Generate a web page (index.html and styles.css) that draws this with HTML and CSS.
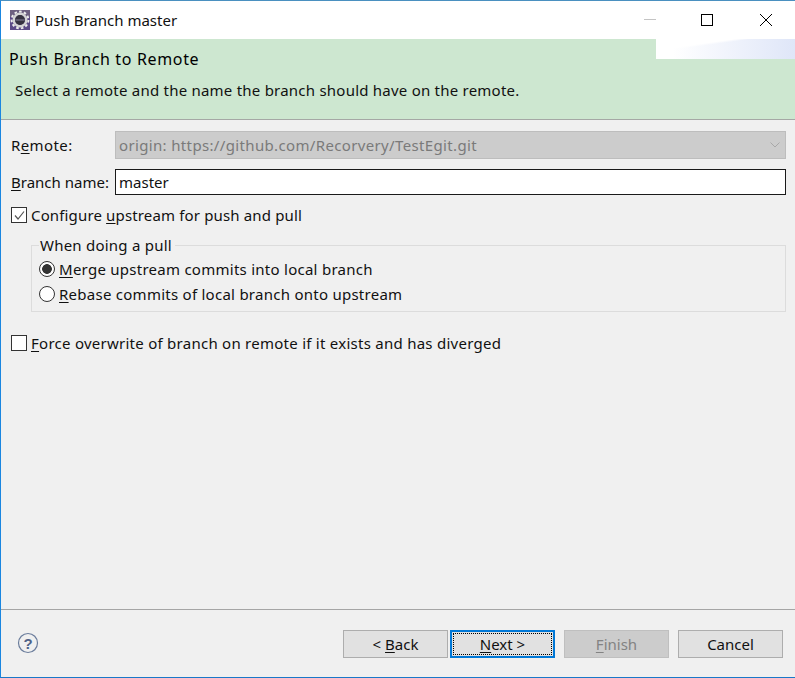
FILE: index.html
```html
<!DOCTYPE html>
<html lang="en">
<head>
<meta charset="utf-8">
<title>Push Branch master</title>
<link rel="stylesheet" href="styles.css">
</head>
<body>
<div class="window">
  <header class="titlebar">
    <div class="title">
      <svg class="app-icon" width="20" height="20" viewBox="0 0 20 20">
        <rect width="20" height="20" fill="#5b4a86"/>
        <rect width="20" height="7" fill="#6d6080"/>
        <circle cx="10" cy="10" r="8.4" fill="none" stroke="#ececec" stroke-width="2" stroke-dasharray="2.6 2.2"/>
        <circle cx="10" cy="10" r="6.2" fill="none" stroke="#d4d4d4" stroke-width="2.6"/>
        <circle cx="10" cy="10" r="4.9" fill="#35323f"/>
        <rect x="5.5" y="9.4" width="9" height="1.2" fill="#77758a"/>
      </svg>
      <span>Push Branch master</span>
    </div>
    <div class="controls">
      <svg class="ctl" width="13" height="13" viewBox="0 0 13 13"><path d="M0 5.5H12" stroke="#c4c4c4" fill="none"/></svg>
      <svg class="ctl ctl-max" width="13" height="13" viewBox="0 0 13 13"><rect x="0.5" y="0.5" width="11" height="11" fill="none" stroke="#000"/></svg>
      <svg class="ctl ctl-close" width="13" height="13" viewBox="0 0 13 13"><path d="M0 0L12 12M12 0L0 12" stroke="#000" fill="none"/></svg>
    </div>
  </header>
  <section class="banner">
    <div class="banner-corner"></div>
    <h1 class="banner-title">Push Branch to Remote</h1>
    <p class="banner-text">Select a remote and the name the branch should have on the remote.</p>
  </section>
  <main class="content">
    <div class="row">
      <label class="field-label label-remote">R<u>e</u>mote:</label>
      <div class="select"><span>origin: https://github.com/Recorvery/TestEgit.git</span>
        <svg width="10" height="6" viewBox="0 0 10 6"><path d="M0.5 0.5L5 5L9.5 0.5" fill="none" stroke="#a8a8a8"/></svg>
      </div>
    </div>
    <div class="row row-branch">
      <label class="field-label"><u>B</u>ranch name:</label>
      <div class="input">master</div>
    </div>
    <div class="check check-upstream">
      <span class="box"><svg width="13" height="13" viewBox="0 0 13 13"><path d="M2 6.5L5 10L11 2.5" fill="none" stroke="#555" stroke-width="1.2"/></svg></span>
      <span class="text-mid">Configure <u>u</u>pstream for push and pull</span>
    </div>
    <fieldset class="group">
      <legend>When doing a pull</legend>
      <div class="radio"><span class="dot on"></span><span class="text-wide"><u>M</u>erge upstream commits into local branch</span></div>
      <div class="radio"><span class="dot"></span><span class="text-wide"><u>R</u>ebase commits of local branch onto upstream</span></div>
    </fieldset>
    <div class="check check-force">
      <span class="box"></span>
      <span class="text-wide"><u>F</u>orce overwrite of branch on remote if it exists and has diverged</span>
    </div>
  </main>
  <footer class="footer">
    <svg class="help" width="22" height="22" viewBox="0 0 22 22">
      <circle cx="11" cy="11" r="9.5" fill="none" stroke="#6b7d9c" stroke-width="1.2"/>
      <text x="11" y="16.5" text-anchor="middle" class="help-mark">?</text>
    </svg>
    <div class="buttons">
      <button class="btn"><span>&lt; <u>B</u>ack</span></button>
      <button class="btn btn-default"><span class="focus"><span><u>N</u>ext &gt;</span></span></button>
      <button class="btn btn-disabled"><span><u>F</u>inish</span></button>
      <button class="btn">Cancel</button>
    </div>
  </footer>
</div>
</body>
</html>
```
FILE: styles.css
```css
* { box-sizing: border-box; }
html, body { margin: 0; padding: 0; height: 100%; }
body { font-family: "Noto Sans", "Open Sans", sans-serif; font-size: 15px; color: #111; background: #f0f0f0; }
u { text-underline-offset: 2px; text-decoration-thickness: 1px; }
.window { width: 795px; height: 678px; display: flex; flex-direction: column; border-top: 1px solid #4a90c0; border-left: 1px solid #1a86e0; border-bottom: 1px solid #1a78c8; background: #f0f0f0; }
.titlebar { height: 38px; background: #fff; display: flex; justify-content: space-between; align-items: center; flex: none; }
.title { display: flex; align-items: center; gap: 5px; padding-left: 9px; }
.app-icon { display: block; }
.controls { display: flex; padding-right: 22px; }
.ctl { display: block; }
.ctl-max { margin-left: 44px; }
.ctl-close { margin-left: 46px; }
.banner { position: relative; flex: none; height: 81px; background: #cde7d0; border-bottom: 1px solid #a5a8a5; padding: 9px 0 0 8px; }
.banner-corner { position: absolute; right: 0; top: 0; width: 139px; height: 20px; background: linear-gradient(172deg, #fff 28%, rgba(255,255,255,0) 34%), linear-gradient(90deg, #fff 12%, #dfe6f8 100%); }
.banner-title { margin: 0; font-size: 16px; font-weight: 400; color: #000; line-height: 22px; letter-spacing: .65px; }
.banner-text { margin: 9px 0 0 6px; line-height: 22px; letter-spacing: .23px; }
.content { flex: 1; padding: 11px 9px 0 10px; }
.row { display: flex; align-items: center; }
.field-label { width: 104px; flex: none; }
.label-remote { letter-spacing: .4px; }
.select { flex: 1; height: 28px; background: #ccc; border: 1px solid #bdbdbd; color: #7a7a7a; display: flex; justify-content: space-between; align-items: center; padding: 0 5px 0 3px; letter-spacing: .35px; }
.row-branch { margin-top: 10px; }
.input { flex: 1; height: 26px; background: #fff; border: 1px solid #1a1a1a; padding: 0 3px; display: flex; align-items: center; }
.text-wide { letter-spacing: .26px; }
.text-mid { letter-spacing: .15px; }
.check { display: flex; align-items: center; gap: 4px; line-height: 22px; }
.check-upstream { margin-top: 9px; }
.box { width: 16px; height: 16px; border: 1px solid #333; background: #fff; display: flex; align-items: center; justify-content: center; flex: none; }
.group { margin: 8px 0 0 20px; padding: 0 0 0 7px; height: 78px; border: 1px solid #dcdcdc; min-width: 0; }
.group legend { padding: 0 3px 0 1px; line-height: 22px; letter-spacing: .23px; }
.radio { display: flex; align-items: center; gap: 4px; line-height: 22px; height: 25px; }
.dot { width: 16px; height: 16px; border-radius: 50%; border: 1px solid #333; background: #fff; flex: none; display: flex; }
.dot.on { background: radial-gradient(circle, #333 0 4.5px, #fff 5.2px); }
.check-force { margin-top: 20px; }
.footer { flex: none; height: 68px; border-top: 1px solid #a5a5a5; display: flex; justify-content: space-between; align-items: center; padding: 0 12px 0 16px; }
.help { display: block; margin-bottom: 1px; }
.help-mark { font: bold 15px "Liberation Sans", sans-serif; fill: #4f6288; }
.buttons { display: flex; gap: 9px; }
.btn { width: 105px; height: 28px; font: inherit; color: #111; background: #e1e1e1; border: 1px solid #adadad; padding: 0; display: flex; align-items: center; justify-content: center; }
.btn-default { margin-left: -7px; border: 2px solid #0078d7; padding: 1px; }
.focus { border: 1px dotted #000; width: 100%; height: 100%; display: flex; align-items: center; justify-content: center; }
.btn-disabled { background: #ccc; border-color: #bfbfbf; color: #838383; }
```
